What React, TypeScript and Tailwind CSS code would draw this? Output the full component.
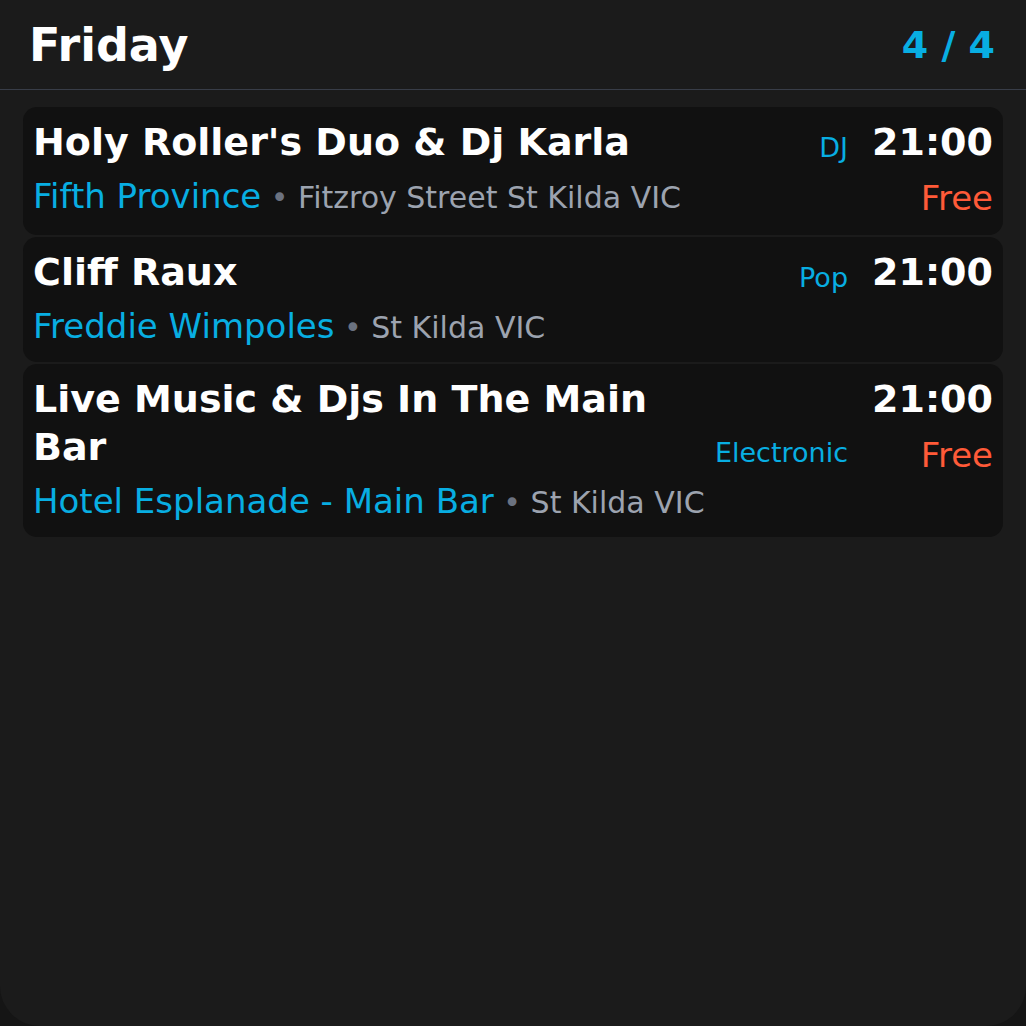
import React from 'react';

type Gig = {
    id: number;
    title: string;
    venue: string;
    suburb: string;
    genre: string;
    time: string;
    price?: string;
};

const gigs: Gig[] = [
    {
        id: 1,
        title: "Holy Roller's Duo & Dj Karla",
        venue: 'Fifth Province',
        suburb: 'Fitzroy Street St Kilda VIC',
        genre: 'DJ',
        time: '21:00',
        price: 'Free',
    },
    {
        id: 2,
        title: 'Cliff Raux',
        venue: 'Freddie Wimpoles',
        suburb: 'St Kilda VIC',
        genre: 'Pop',
        time: '21:00',
    },
    {
        id: 3,
        title: 'Live Music & Djs In The Main Bar',
        venue: 'Hotel Esplanade - Main Bar',
        suburb: 'St Kilda VIC',
        genre: 'Electronic',
        time: '21:00',
        price: 'Free',
    },
];

function GigCard({ gig }: { gig: Gig }) {
    return (
        <div className="flex items-start gap-6 rounded-[14px] bg-[#111111] px-[10px] pt-[11px] pb-[16px]">
            <div className="flex min-w-0 flex-1 flex-col">
                <div className="flex items-end gap-4">
                    <h2 className="min-w-0 flex-1 text-[38px] leading-[48px] font-bold text-white">
                        {gig.title}
                    </h2>
                    <span className="shrink-0 text-[27px] leading-[36px] text-[#08aee2]">
                        {gig.genre}
                    </span>
                </div>
                <p className="mt-[10px] text-[34px] leading-[40px] text-[#08aee2]">
                    {gig.venue}
                    <span className="text-[30px] leading-[34px] text-[#6b7280]">
                        {' '}
                        •{' '}
                    </span>
                    <span className="text-[30px] leading-[34px] text-[#9ca3af]">
                        {gig.suburb}
                    </span>
                </p>
            </div>
            <div className="flex shrink-0 flex-col items-end">
                <span className="text-[38px] leading-[48px] font-bold text-white">
                    {gig.time}
                </span>
                {gig.price && (
                    <span className="mt-[11px] text-[34px] leading-[42px] text-[#ff5a38]">
                        {gig.price}
                    </span>
                )}
            </div>
        </div>
    );
}

export default function App() {
    return (
        <div
            className="min-h-screen bg-[#151515]"
            style={{ fontFamily: '"DejaVu Sans", sans-serif' }}
        >
            <div className="flex h-[1026px] flex-col rounded-b-[40px] bg-[#1b1b1b]">
                <header className="flex h-[90px] items-center justify-between border-b border-[#383d48] pr-[31px] pl-[29px]">
                    <h1 className="text-[46px] leading-none font-bold text-white">
                        Friday
                    </h1>
                    <span className="text-[38px] leading-none font-bold text-[#08aee2]">
                        4 / 4
                    </span>
                </header>
                <div className="flex flex-col gap-[2px] px-[23px] pt-[17px]">
                    {gigs.map((gig) => (
                        <GigCard key={gig.id} gig={gig} />
                    ))}
                </div>
            </div>
        </div>
    );
}
